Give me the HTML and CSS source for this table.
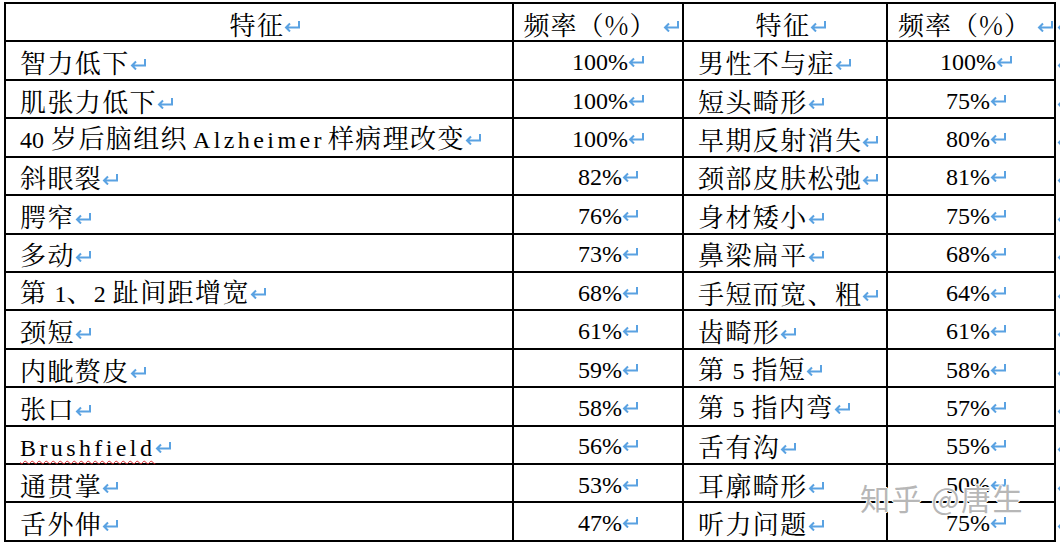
FILE: index.html
```html
<!DOCTYPE html>
<html lang="zh-CN">
<head>
<meta charset="utf-8">
<link rel="stylesheet" href="styles.css">
</head>
<body>
<div class="page">
<table class="tbl">
  <colgroup>
    <col class="c1"><col class="c2"><col class="c3"><col class="c4"><col class="c5">
  </colgroup>
  <tr class="head">
    <td class="ctr">特征<svg class="pm" viewBox="0 0 18 12"><path d="M15 1V7.5H2M6 3.5L2 7.5L6 11.5"/></svg></td>
    <td class="ctr h2">频率（%）<svg class="pm pg" viewBox="0 0 18 12"><path d="M15 1V7.5H2M6 3.5L2 7.5L6 11.5"/></svg></td>
    <td class="ctr">特征<svg class="pm" viewBox="0 0 18 12"><path d="M15 1V7.5H2M6 3.5L2 7.5L6 11.5"/></svg></td>
    <td class="ctr h4">频率（%）<svg class="pm pg" viewBox="0 0 18 12"><path d="M15 1V7.5H2M6 3.5L2 7.5L6 11.5"/></svg></td>
    <td class="end"><svg class="pm" viewBox="0 0 18 12"><path d="M15 1V7.5H2M6 3.5L2 7.5L6 11.5"/></svg></td>
  </tr>
  <tr>
    <td class="txt">智力低下<svg class="pm" viewBox="0 0 18 12"><path d="M15 1V7.5H2M6 3.5L2 7.5L6 11.5"/></svg></td>
    <td class="num n2">100%<svg class="pm" viewBox="0 0 18 12"><path d="M15 1V7.5H2M6 3.5L2 7.5L6 11.5"/></svg></td>
    <td class="txt">男性不与症<svg class="pm" viewBox="0 0 18 12"><path d="M15 1V7.5H2M6 3.5L2 7.5L6 11.5"/></svg></td>
    <td class="num n4">100%<svg class="pm" viewBox="0 0 18 12"><path d="M15 1V7.5H2M6 3.5L2 7.5L6 11.5"/></svg></td>
    <td class="end"><svg class="pm" viewBox="0 0 18 12"><path d="M15 1V7.5H2M6 3.5L2 7.5L6 11.5"/></svg></td>
  </tr>
  <tr>
    <td class="txt">肌张力低下<svg class="pm" viewBox="0 0 18 12"><path d="M15 1V7.5H2M6 3.5L2 7.5L6 11.5"/></svg></td>
    <td class="num n2">100%<svg class="pm" viewBox="0 0 18 12"><path d="M15 1V7.5H2M6 3.5L2 7.5L6 11.5"/></svg></td>
    <td class="txt">短头畸形<svg class="pm" viewBox="0 0 18 12"><path d="M15 1V7.5H2M6 3.5L2 7.5L6 11.5"/></svg></td>
    <td class="num n4">75%<svg class="pm" viewBox="0 0 18 12"><path d="M15 1V7.5H2M6 3.5L2 7.5L6 11.5"/></svg></td>
    <td class="end"><svg class="pm" viewBox="0 0 18 12"><path d="M15 1V7.5H2M6 3.5L2 7.5L6 11.5"/></svg></td>
  </tr>
  <tr>
    <td class="txt"><span class="lat mr">40</span>岁后脑组织<span class="mono gap">Alzheimer</span>样病理改变<svg class="pm" viewBox="0 0 18 12"><path d="M15 1V7.5H2M6 3.5L2 7.5L6 11.5"/></svg></td>
    <td class="num n2">100%<svg class="pm" viewBox="0 0 18 12"><path d="M15 1V7.5H2M6 3.5L2 7.5L6 11.5"/></svg></td>
    <td class="txt">早期反射消失<svg class="pm" viewBox="0 0 18 12"><path d="M15 1V7.5H2M6 3.5L2 7.5L6 11.5"/></svg></td>
    <td class="num n4">80%<svg class="pm" viewBox="0 0 18 12"><path d="M15 1V7.5H2M6 3.5L2 7.5L6 11.5"/></svg></td>
    <td class="end"><svg class="pm" viewBox="0 0 18 12"><path d="M15 1V7.5H2M6 3.5L2 7.5L6 11.5"/></svg></td>
  </tr>
  <tr>
    <td class="txt">斜眼裂<svg class="pm" viewBox="0 0 18 12"><path d="M15 1V7.5H2M6 3.5L2 7.5L6 11.5"/></svg></td>
    <td class="num n2">82%<svg class="pm" viewBox="0 0 18 12"><path d="M15 1V7.5H2M6 3.5L2 7.5L6 11.5"/></svg></td>
    <td class="txt">颈部皮肤松弛<svg class="pm" viewBox="0 0 18 12"><path d="M15 1V7.5H2M6 3.5L2 7.5L6 11.5"/></svg></td>
    <td class="num n4">81%<svg class="pm" viewBox="0 0 18 12"><path d="M15 1V7.5H2M6 3.5L2 7.5L6 11.5"/></svg></td>
    <td class="end"><svg class="pm" viewBox="0 0 18 12"><path d="M15 1V7.5H2M6 3.5L2 7.5L6 11.5"/></svg></td>
  </tr>
  <tr>
    <td class="txt">腭窄<svg class="pm" viewBox="0 0 18 12"><path d="M15 1V7.5H2M6 3.5L2 7.5L6 11.5"/></svg></td>
    <td class="num n2">76%<svg class="pm" viewBox="0 0 18 12"><path d="M15 1V7.5H2M6 3.5L2 7.5L6 11.5"/></svg></td>
    <td class="txt">身材矮小<svg class="pm" viewBox="0 0 18 12"><path d="M15 1V7.5H2M6 3.5L2 7.5L6 11.5"/></svg></td>
    <td class="num n4">75%<svg class="pm" viewBox="0 0 18 12"><path d="M15 1V7.5H2M6 3.5L2 7.5L6 11.5"/></svg></td>
    <td class="end"><svg class="pm" viewBox="0 0 18 12"><path d="M15 1V7.5H2M6 3.5L2 7.5L6 11.5"/></svg></td>
  </tr>
  <tr>
    <td class="txt">多动<svg class="pm" viewBox="0 0 18 12"><path d="M15 1V7.5H2M6 3.5L2 7.5L6 11.5"/></svg></td>
    <td class="num n2">73%<svg class="pm" viewBox="0 0 18 12"><path d="M15 1V7.5H2M6 3.5L2 7.5L6 11.5"/></svg></td>
    <td class="txt">鼻梁扁平<svg class="pm" viewBox="0 0 18 12"><path d="M15 1V7.5H2M6 3.5L2 7.5L6 11.5"/></svg></td>
    <td class="num n4">68%<svg class="pm" viewBox="0 0 18 12"><path d="M15 1V7.5H2M6 3.5L2 7.5L6 11.5"/></svg></td>
    <td class="end"><svg class="pm" viewBox="0 0 18 12"><path d="M15 1V7.5H2M6 3.5L2 7.5L6 11.5"/></svg></td>
  </tr>
  <tr>
    <td class="txt">第<span class="lat ml">1</span>、<span class="lat mr">2</span>趾间距增宽<svg class="pm" viewBox="0 0 18 12"><path d="M15 1V7.5H2M6 3.5L2 7.5L6 11.5"/></svg></td>
    <td class="num n2">68%<svg class="pm" viewBox="0 0 18 12"><path d="M15 1V7.5H2M6 3.5L2 7.5L6 11.5"/></svg></td>
    <td class="txt">手短而宽、粗<svg class="pm" viewBox="0 0 18 12"><path d="M15 1V7.5H2M6 3.5L2 7.5L6 11.5"/></svg></td>
    <td class="num n4">64%<svg class="pm" viewBox="0 0 18 12"><path d="M15 1V7.5H2M6 3.5L2 7.5L6 11.5"/></svg></td>
    <td class="end"><svg class="pm" viewBox="0 0 18 12"><path d="M15 1V7.5H2M6 3.5L2 7.5L6 11.5"/></svg></td>
  </tr>
  <tr>
    <td class="txt">颈短<svg class="pm" viewBox="0 0 18 12"><path d="M15 1V7.5H2M6 3.5L2 7.5L6 11.5"/></svg></td>
    <td class="num n2">61%<svg class="pm" viewBox="0 0 18 12"><path d="M15 1V7.5H2M6 3.5L2 7.5L6 11.5"/></svg></td>
    <td class="txt">齿畸形<svg class="pm" viewBox="0 0 18 12"><path d="M15 1V7.5H2M6 3.5L2 7.5L6 11.5"/></svg></td>
    <td class="num n4">61%<svg class="pm" viewBox="0 0 18 12"><path d="M15 1V7.5H2M6 3.5L2 7.5L6 11.5"/></svg></td>
    <td class="end"><svg class="pm" viewBox="0 0 18 12"><path d="M15 1V7.5H2M6 3.5L2 7.5L6 11.5"/></svg></td>
  </tr>
  <tr>
    <td class="txt">内眦赘皮<svg class="pm" viewBox="0 0 18 12"><path d="M15 1V7.5H2M6 3.5L2 7.5L6 11.5"/></svg></td>
    <td class="num n2">59%<svg class="pm" viewBox="0 0 18 12"><path d="M15 1V7.5H2M6 3.5L2 7.5L6 11.5"/></svg></td>
    <td class="txt">第<span class="lat ml mr">5</span>指短<svg class="pm" viewBox="0 0 18 12"><path d="M15 1V7.5H2M6 3.5L2 7.5L6 11.5"/></svg></td>
    <td class="num n4">58%<svg class="pm" viewBox="0 0 18 12"><path d="M15 1V7.5H2M6 3.5L2 7.5L6 11.5"/></svg></td>
    <td class="end"><svg class="pm" viewBox="0 0 18 12"><path d="M15 1V7.5H2M6 3.5L2 7.5L6 11.5"/></svg></td>
  </tr>
  <tr>
    <td class="txt">张口<svg class="pm" viewBox="0 0 18 12"><path d="M15 1V7.5H2M6 3.5L2 7.5L6 11.5"/></svg></td>
    <td class="num n2">58%<svg class="pm" viewBox="0 0 18 12"><path d="M15 1V7.5H2M6 3.5L2 7.5L6 11.5"/></svg></td>
    <td class="txt">第<span class="lat ml mr">5</span>指内弯<svg class="pm" viewBox="0 0 18 12"><path d="M15 1V7.5H2M6 3.5L2 7.5L6 11.5"/></svg></td>
    <td class="num n4">57%<svg class="pm" viewBox="0 0 18 12"><path d="M15 1V7.5H2M6 3.5L2 7.5L6 11.5"/></svg></td>
    <td class="end"><svg class="pm" viewBox="0 0 18 12"><path d="M15 1V7.5H2M6 3.5L2 7.5L6 11.5"/></svg></td>
  </tr>
  <tr>
    <td class="txt"><span class="mono squig">Brushfield</span><svg class="pm" viewBox="0 0 18 12"><path d="M15 1V7.5H2M6 3.5L2 7.5L6 11.5"/></svg></td>
    <td class="num n2">56%<svg class="pm" viewBox="0 0 18 12"><path d="M15 1V7.5H2M6 3.5L2 7.5L6 11.5"/></svg></td>
    <td class="txt">舌有沟<svg class="pm" viewBox="0 0 18 12"><path d="M15 1V7.5H2M6 3.5L2 7.5L6 11.5"/></svg></td>
    <td class="num n4">55%<svg class="pm" viewBox="0 0 18 12"><path d="M15 1V7.5H2M6 3.5L2 7.5L6 11.5"/></svg></td>
    <td class="end"><svg class="pm" viewBox="0 0 18 12"><path d="M15 1V7.5H2M6 3.5L2 7.5L6 11.5"/></svg></td>
  </tr>
  <tr>
    <td class="txt">通贯掌<svg class="pm" viewBox="0 0 18 12"><path d="M15 1V7.5H2M6 3.5L2 7.5L6 11.5"/></svg></td>
    <td class="num n2">53%<svg class="pm" viewBox="0 0 18 12"><path d="M15 1V7.5H2M6 3.5L2 7.5L6 11.5"/></svg></td>
    <td class="txt">耳廓畸形<svg class="pm" viewBox="0 0 18 12"><path d="M15 1V7.5H2M6 3.5L2 7.5L6 11.5"/></svg></td>
    <td class="num n4">50%<svg class="pm" viewBox="0 0 18 12"><path d="M15 1V7.5H2M6 3.5L2 7.5L6 11.5"/></svg></td>
    <td class="end"><svg class="pm" viewBox="0 0 18 12"><path d="M15 1V7.5H2M6 3.5L2 7.5L6 11.5"/></svg></td>
  </tr>
  <tr>
    <td class="txt">舌外伸<svg class="pm" viewBox="0 0 18 12"><path d="M15 1V7.5H2M6 3.5L2 7.5L6 11.5"/></svg></td>
    <td class="num n2">47%<svg class="pm" viewBox="0 0 18 12"><path d="M15 1V7.5H2M6 3.5L2 7.5L6 11.5"/></svg></td>
    <td class="txt">听力问题<svg class="pm" viewBox="0 0 18 12"><path d="M15 1V7.5H2M6 3.5L2 7.5L6 11.5"/></svg></td>
    <td class="num n4">75%<svg class="pm" viewBox="0 0 18 12"><path d="M15 1V7.5H2M6 3.5L2 7.5L6 11.5"/></svg></td>
    <td class="end"><svg class="pm" viewBox="0 0 18 12"><path d="M15 1V7.5H2M6 3.5L2 7.5L6 11.5"/></svg></td>
  </tr>
</table>
<div class="watermark">知乎 @唐生</div>
</div>
</body>
</html>
```
FILE: styles.css
```css
html, body {
  margin: 0;
  padding: 0;
  background: #fff;
  overflow: hidden;
}
.page {
  position: relative;
  width: 1060px;
  height: 546px;
  overflow: hidden;
}
.tbl {
  border-collapse: collapse;
  table-layout: fixed;
  width: 1072px;
  margin: 2px 0 0 4px;
  font-family: "Noto Serif CJK SC", "Noto Sans CJK SC", serif;
  font-size: 26px;
  color: #000;
}
.c1 { width: 508px; }
.c2 { width: 170px; }
.c3 { width: 204px; }
.c4 { width: 168px; }
.c5 { width: 22px; }
.tbl tr { height: 38.43px; }
.tbl td {
  border: 2px solid #000;
  padding: 3px 0 0 14px;
  line-height: 30px;
  white-space: nowrap;
  vertical-align: middle;
  letter-spacing: 1.4px;
}
.tbl td.end {
  border: none;
  padding: 3px 0 0 1px;
}
.ctr { text-align: center; }
.txt { text-align: left; }
.tbl td.h2 { padding-left: 8px; letter-spacing: 1px; }
.tbl td.h4 { padding-left: 10px; letter-spacing: 1px; }
.pg { margin-left: 6px; }
.num {
  text-align: center;
  font-family: "Liberation Serif", serif;
  font-size: 24px;
}
.tbl td.num { letter-spacing: 0; }
.tbl td.n2 { padding-left: 22px; }
.tbl td.n4 { padding-left: 12px; }
.lat {
  font-family: "Liberation Serif", serif;
  font-size: 24px;
  letter-spacing: 0;
}
.mono {
  font-family: "Liberation Serif", serif;
  font-size: 24px;
  letter-spacing: 3.4px;
}
.ml { margin-left: 7px; }
.mr { margin-right: 7px; }
.gap { margin: 0 3px 0 5px; }
.squig {
  text-decoration: underline wavy #d8262b;
  text-decoration-thickness: 1px;
  text-underline-offset: 4px;
}
.pm {
  width: 18px;
  height: 12px;
  vertical-align: 3px;
  fill: none;
  stroke: #5aa2e2;
  stroke-width: 2;
}
.watermark {
  position: absolute;
  left: 860px;
  top: 475px;
  font-family: "Noto Sans CJK SC", sans-serif;
  font-size: 30px;
  letter-spacing: 1.5px;
  color: rgba(170, 170, 170, 0.85);
  text-shadow: 1px 0 0 #fff, -1px 0 0 #fff, 0 1px 0 #fff, 0 -1px 0 #fff;
  white-space: nowrap;
}
```
